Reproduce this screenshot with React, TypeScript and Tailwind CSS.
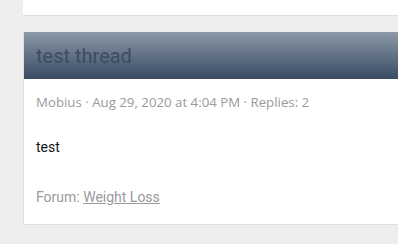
export default function App() {
  return (
    <div className="h-[244px] w-[398px] overflow-hidden bg-[#eeeeee] pl-[23px] font-['Roboto',sans-serif]">
      {/* previous card, mostly scrolled off */}
      <div className="h-[16px] w-[400px] border-b border-[#dedede] bg-white" />

      <div className="mt-[16px] w-[400px] border-b border-l border-[#dedede] bg-white">
        <div className="flex h-[47px] items-center bg-gradient-to-b from-[#8c99a7] to-[#3a4c64] px-[12px]">
          <h2 className="text-[20px] leading-none text-[#3d4d60]">test thread</h2>
        </div>
        <div className="px-[12px] pb-[17px]">
          <div className="mt-[13px] text-[13.25px] leading-[20px] text-[#9a9a9a] font-['Open_Sans',sans-serif]">
            Mobius · Aug 29, 2020 at 4:04 PM · Replies: 2
          </div>
          <div className="mt-[25px] text-[14px] leading-[20px] text-[#141414]">test</div>
          <div className="mt-[30px] text-[14px] leading-[20px] text-[#9a9a9a]">
            Forum: <a className="underline">Weight Loss</a>
          </div>
        </div>
      </div>
    </div>
  );
}
